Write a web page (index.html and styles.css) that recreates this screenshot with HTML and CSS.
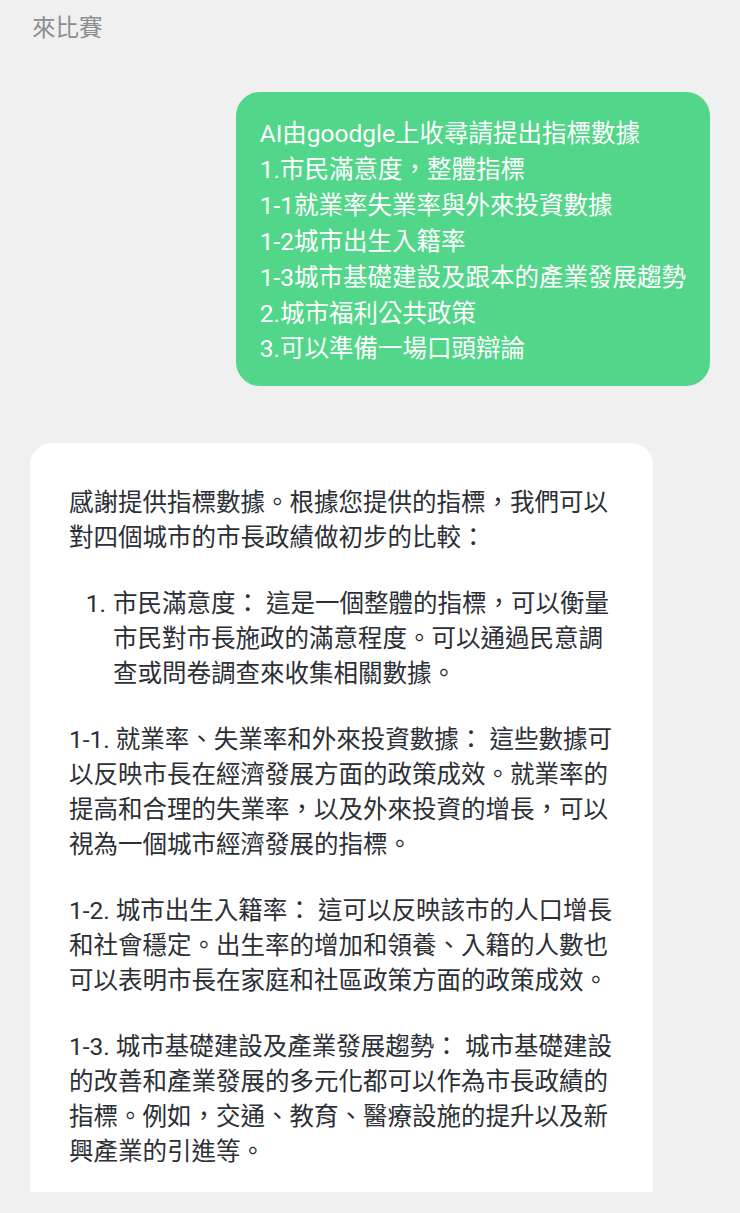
FILE: index.html
```html
<!DOCTYPE html>
<html lang="zh-Hant">
<head>
<meta charset="utf-8">
<title>來比賽</title>
<link rel="stylesheet" href="styles.css">
</head>
<body>
<div class="chat">
  <div class="header">來比賽</div>

  <div class="bubble bubble-out">
    AI由goodgle上收尋請提出指標數據<br>
    1.市民滿意度，整體指標<br>
    1-1就業率失業率與外來投資數據<br>
    1-2城市出生入籍率<br>
    1-3城市基礎建設及跟本的產業發展趨勢<br>
    2.城市福利公共政策<br>
    3.可以準備一場口頭辯論
  </div>

  <div class="bubble bubble-in">
    <p class="para">感謝提供指標數據。根據您提供的指標，我們可以<br>對四個城市的市長政績做初步的比較：</p>
    <div class="para item">
      <span class="num">1.</span>
      <span class="item-text">市民滿意度： 這是一個整體的指標，可以衡量<br>市民對市長施政的滿意程度。可以通過民意調<br>查或問卷調查來收集相關數據。</span>
    </div>
    <p class="para">1-1. 就業率、失業率和外來投資數據： 這些數據可<br>以反映市長在經濟發展方面的政策成效。就業率的<br>提高和合理的失業率，以及外來投資的增長，可以<br>視為一個城市經濟發展的指標。</p>
    <p class="para">1-2. 城市出生入籍率： 這可以反映該市的人口增長<br>和社會穩定。出生率的增加和領養、入籍的人數也<br>可以表明市長在家庭和社區政策方面的政策成效。</p>
    <p class="para">1-3. 城市基礎建設及產業發展趨勢： 城市基礎建設<br>的改善和產業發展的多元化都可以作為市長政績的<br>指標。例如，交通、教育、醫療設施的提升以及新<br>興產業的引進等。</p>
  </div>
</div>
</body>
</html>
```

FILE: styles.css
```css
html, body {
  margin: 0;
  padding: 0;
  background: #f0f0f0;
}

body {
  font-family: Roboto, "Noto Sans CJK TC", "Noto Sans", sans-serif;
  width: 740px;
  height: 1213px;
  overflow: hidden;
}

.chat {
  display: flex;
  flex-direction: column;
}

.header {
  margin: 10px 0 0 32px;
  font-size: 23.5px;
  line-height: 36px;
  color: #8b8d92;
}

.bubble {
  font-size: 24.5px;
  white-space: nowrap;
}

.bubble-out {
  align-self: flex-end;
  margin: 46px 30px 0 0;
  padding: 24px 24px 19px 24px;
  background: #52d68a;
  color: #ffffff;
  line-height: 35.9px;
  border-radius: 24px;
}

.bubble-in {
  align-self: flex-start;
  margin: 57px 0 0 30px;
  width: 623px;
  box-sizing: border-box;
  padding: 42px 38px 23px 39px;
  background: #ffffff;
  color: #2c2f36;
  line-height: 35px;
  border-radius: 22px 22px 0 0;
}

.para {
  margin: 0 0 31px 0;
}

.para:last-child {
  margin-bottom: 0;
}

.item {
  display: flex;
}

.num {
  width: 44px;
  padding-right: 7px;
  box-sizing: border-box;
  text-align: right;
  flex: none;
}
```
